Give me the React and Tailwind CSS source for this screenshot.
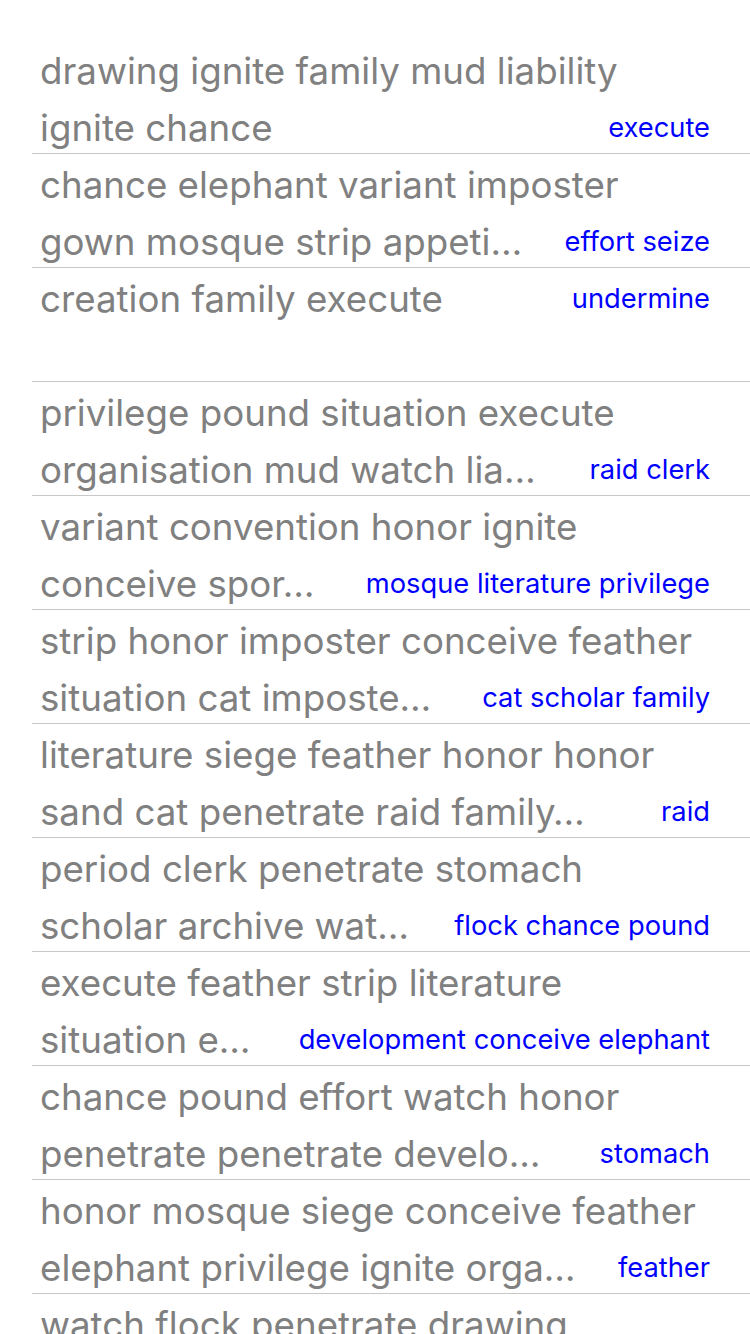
import React from "react";

const rows = [
  ["drawing ignite family mud liability", "ignite chance", "execute"],
  ["chance elephant variant imposter", "gown mosque strip appeti…", "effort seize"],
  ["creation family execute", null, "undermine"],
  ["privilege pound situation execute", "organisation mud watch lia…", "raid clerk"],
  ["variant convention honor ignite", "conceive spor…", "mosque literature privilege"],
  ["strip honor imposter conceive feather", "situation cat imposte…", "cat scholar family"],
  ["literature siege feather honor honor", "sand cat penetrate raid family…", "raid"],
  ["period clerk penetrate stomach", "scholar archive wat…", "flock chance pound"],
  ["execute feather strip literature", "situation e…", "development conceive elephant"],
  ["chance pound effort watch honor", "penetrate penetrate develo…", "stomach"],
  ["honor mosque siege conceive feather", "elephant privilege ignite orga…", "feather"],
  ["watch flock penetrate drawing", "honor siege cat archive…", "period"],
];

function Row({ a, b, label }) {
  const lbl = (
    <span className="shrink-0 whitespace-nowrap text-[27.3px] text-[#0000ff]">{label}</span>
  );
  return (
    <div className="h-[114px] shrink-0 overflow-hidden border-b border-[#c8c8c8] pl-2 pr-10 pt-[2px] leading-[57px]">
      {b === null ? (
        <div className="flex items-center justify-between gap-4">
          <span className="whitespace-nowrap text-[36.7px] text-[#808080]">{a}</span>
          {lbl}
        </div>
      ) : (
        <>
          <div className="whitespace-nowrap text-[36.7px] text-[#808080]">{a}</div>
          <div className="flex items-center justify-between gap-4">
            <span className="whitespace-nowrap text-[36.7px] text-[#808080]">{b}</span>
            {lbl}
          </div>
        </>
      )}
    </div>
  );
}

export default function App() {
  return (
    <div
      className="h-[1334px] w-[750px] overflow-hidden bg-white pt-10"
      style={{ fontFamily: "Inter, 'Noto Sans', sans-serif" }}
    >
      <div className="ml-8 flex flex-col">
        {rows.map((r, i) => (
          <Row key={i} a={r[0]} b={r[1]} label={r[2]} />
        ))}
      </div>
    </div>
  );
}
